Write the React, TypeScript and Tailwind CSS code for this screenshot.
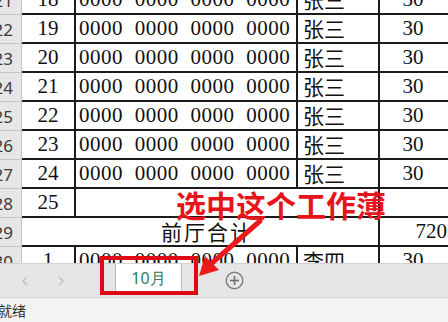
import React from "react";

type Row = {
  hdr: number;
  a?: string;
  b?: string;
  c?: string;
  d?: string;
  kind?: "normal" | "blank" | "total";
};

const ZEROS = "0000 0000 0000 0000";

const rows: Row[] = [
  { hdr: 21, a: "18", b: ZEROS, c: "张三", d: "30" },
  { hdr: 22, a: "19", b: ZEROS, c: "张三", d: "30" },
  { hdr: 23, a: "20", b: ZEROS, c: "张三", d: "30" },
  { hdr: 24, a: "21", b: ZEROS, c: "张三", d: "30" },
  { hdr: 25, a: "22", b: ZEROS, c: "张三", d: "30" },
  { hdr: 26, a: "23", b: ZEROS, c: "张三", d: "30" },
  { hdr: 27, a: "24", b: ZEROS, c: "张三", d: "30" },
  { hdr: 28, a: "25", kind: "blank" },
  { hdr: 29, a: "前厅合计", d: "720", kind: "total" },
  { hdr: 30, a: "1", b: ZEROS, c: "李四", d: "30" },
];

const cell = "h-[29px] border-b-2 border-r-2 border-[#1c1c1c] flex items-center overflow-hidden";

function RowHeader({ n }: { n: number }) {
  return (
    <div className="h-[29px] bg-[#e6e6e6] border-b border-r border-[#c4c4c4] flex items-center justify-end pr-[8px] text-[17px] text-[#3a3a3a] font-['Noto_Sans',sans-serif]">
      {n}
    </div>
  );
}

function SheetRow({ r }: { r: Row }) {
  if (r.kind === "total") {
    return (
      <>
        <RowHeader n={r.hdr} />
        <div className={`${cell} col-span-3 justify-center pl-[14px] font-['Noto_Sans_CJK_SC',sans-serif] tracking-[2px]`}>{r.a}</div>
        <div className={`${cell} justify-end pr-[3px] font-['Liberation_Serif',serif]`}>{r.d}</div>
      </>
    );
  }
  if (r.kind === "blank") {
    return (
      <>
        <RowHeader n={r.hdr} />
        <div className={`${cell} justify-center font-['Liberation_Serif',serif]`}>{r.a}</div>
        <div className={`${cell} col-span-2`} />
        <div className={cell} />
      </>
    );
  }
  return (
    <>
      <RowHeader n={r.hdr} />
      <div className={`${cell} justify-center font-['Liberation_Serif',serif]`}>{r.a}</div>
      <div className={`${cell} pl-[3px] whitespace-pre font-['Liberation_Serif',serif] tracking-[0.5px] [word-spacing:6px]`}>{r.b}</div>
      <div className={`${cell} pl-[5px] font-['Noto_Sans_CJK_SC',sans-serif]`}>{r.c}</div>
      <div className={`${cell} justify-center pr-[4px] font-['Liberation_Serif',serif]`}>{r.d}</div>
    </>
  );
}

export default function App() {
  return (
    <div className="relative w-[448px] h-[322px] overflow-hidden bg-white text-[#111]">
      {/* sheet */}
      <div className="h-[263px] overflow-hidden">
        <div className="-mt-[14px] grid grid-cols-[22px_54px_222px_82px_72px] text-[21px] leading-none">
          {rows.map(r => (
            <SheetRow key={r.hdr} r={r} />
          ))}
        </div>
      </div>

      {/* sheet tabs */}
      <div className="h-[34px] bg-[#e6e6e6] border-t border-[#d2d2d2] flex items-stretch">
        <div className="flex items-center gap-[30px] pl-[22px] w-[115px]">
          <svg width="6" height="10" viewBox="0 0 6 10"><path d="M5 1 L1 5 L5 9" fill="none" stroke="#c4c4c4" strokeWidth="1.6" /></svg>
          <svg width="6" height="10" viewBox="0 0 6 10"><path d="M1 1 L5 5 L1 9" fill="none" stroke="#c4c4c4" strokeWidth="1.6" /></svg>
        </div>
        <div className="w-[67px] mb-[5px] bg-white border-x border-[#b8b8b8] flex items-center justify-center text-[16px] text-[#2f7d57] font-['Noto_Sans',sans-serif]">
          10月
        </div>
        <div className="flex items-center pl-[43px]">
          <svg width="19" height="19" viewBox="0 0 19 19">
            <circle cx="9.5" cy="9.5" r="8.3" fill="none" stroke="#7c7c7c" strokeWidth="1.4" />
            <path d="M9.5 5 V14 M5 9.5 H14" stroke="#6c6c6c" strokeWidth="1.6" />
          </svg>
        </div>
      </div>

      {/* status bar */}
      <div className="h-[25px] bg-[#f3f3f3] border-t border-[#d6d6d6] flex items-center -ml-[2px] text-[14px] text-[#333] font-['Noto_Sans_CJK_SC',sans-serif]">
        就绪
      </div>

      {/* annotations */}
      <div className="absolute left-[176px] top-[189px] text-[30px] leading-none font-bold text-[#e8141c] font-['Noto_Sans_CJK_SC',sans-serif] whitespace-nowrap">
        选中这个工作薄
      </div>
      <div className="absolute left-[100px] top-[256px] w-[98px] h-[39px] border-[4px] border-[#e00a16]" />
      <svg className="absolute left-0 top-0" width="448" height="322" viewBox="0 0 448 322">
        <line x1="260" y1="221" x2="212" y2="263" stroke="#ea1a1a" strokeWidth="5" strokeLinecap="round" />
        <polygon points="199,276 205,256 219,270" fill="#ea1a1a" />
      </svg>
    </div>
  );
}
